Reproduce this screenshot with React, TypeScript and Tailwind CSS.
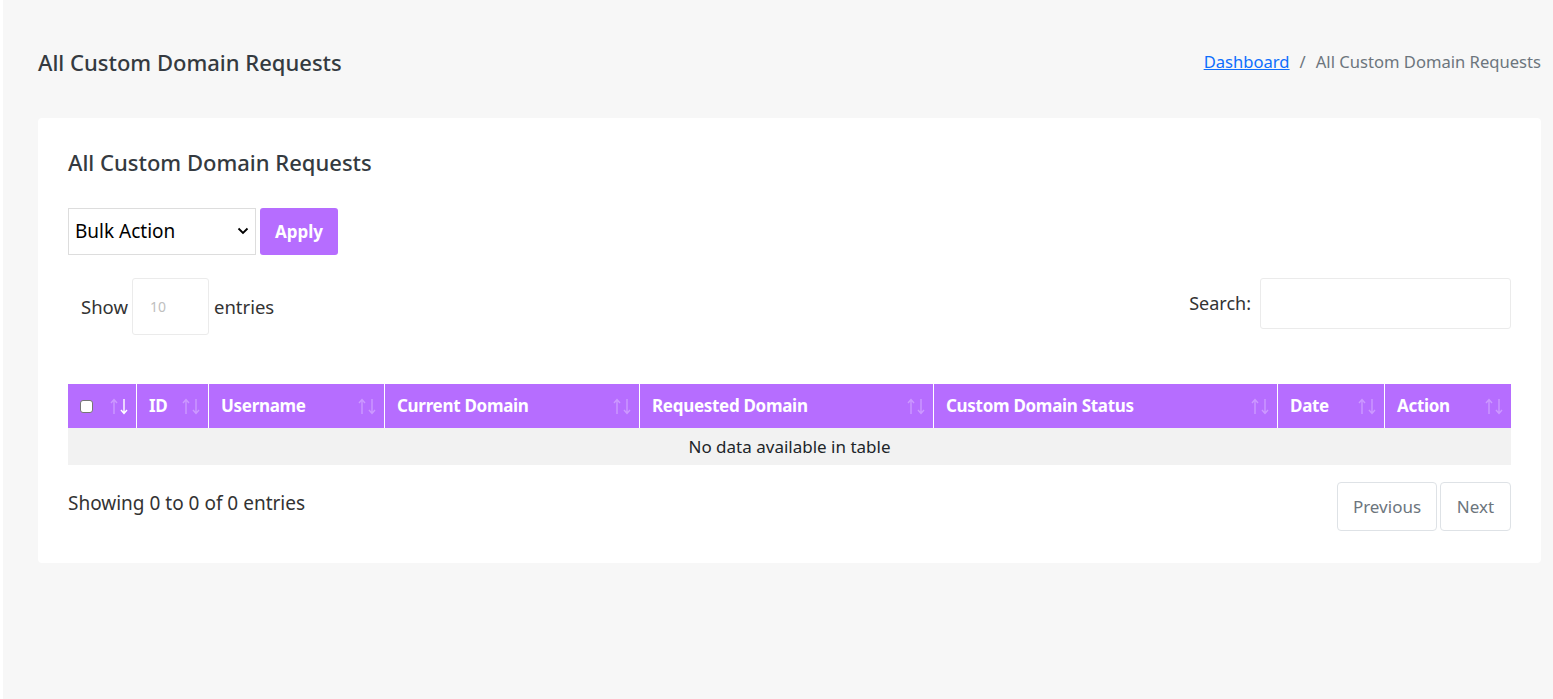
import React from 'react';

const font = { fontFamily: '"Noto Sans", "Open Sans", sans-serif' };

type Col = { label: string; w: string; active?: boolean; check?: boolean };

const cols: Col[] = [
  { label: '', w: 'w-[69px]', check: true, active: true },
  { label: 'ID', w: 'w-[72px]' },
  { label: 'Username', w: 'w-[176px]' },
  { label: 'Current Domain', w: 'w-[255px]' },
  { label: 'Requested Domain', w: 'w-[294px]' },
  { label: 'Custom Domain Status', w: 'w-[344px]' },
  { label: 'Date', w: 'w-[107px]' },
  { label: 'Action', w: 'flex-1' },
];

function Arrow({ down, on }: { down?: boolean; on?: boolean }) {
  return (
    <svg width="8" height="17" viewBox="0 0 8 17" fill="none" className={on ? 'opacity-100' : 'opacity-30'}>
      {down ? (
        <path d="M4 1v14M1 12l3 3.5 3-3.5" stroke="#fff" strokeWidth="1.4" />
      ) : (
        <path d="M4 16V2M1 5l3-3.5L7 5" stroke="#fff" strokeWidth="1.4" />
      )}
    </svg>
  );
}

function SortIcon({ active }: { active?: boolean }) {
  return (
    <span className="flex items-center gap-[2px]">
      <Arrow />
      <Arrow down on={active} />
    </span>
  );
}

export default function App() {
  return (
    <div className="min-h-[699px] bg-white pl-[3px]" style={font}>
      <div className="min-h-[699px] bg-[#f7f7f7] pl-[35px] pr-[12px] pt-[46px]">
        <div className="flex items-center justify-between h-[32px]">
          <h1 className="text-[22px] font-medium text-[#343a40]">All Custom Domain Requests</h1>
          <div className="flex items-center text-[16.6px] text-[#6c757d] gap-[10px]">
            <a href="#" className="text-[#0d6efd] underline">Dashboard</a>
            <span>/</span>
            <span>All Custom Domain Requests</span>
          </div>
        </div>

        <div className="mt-[40px] bg-white rounded-[4px] px-[30px] pt-[30px] pb-[32px]">
          <h2 className="text-[22px] font-medium text-[#343a40] leading-[28px]">All Custom Domain Requests</h2>

          <div className="mt-[32px] flex gap-[4px]">
            <div className="relative w-[188px] h-[47px] border border-[#dddddd] flex items-center pl-[6px] text-[19px] text-black">
              Bulk Action
              <svg className="absolute right-[6px] top-[18px]" width="12" height="8" viewBox="0 0 12 8" fill="none">
                <path d="M1.5 1.5 6 6l4.5-4.5" stroke="#000" strokeWidth="1.8" />
              </svg>
            </div>
            <button className="w-[78px] h-[47px] rounded-[3px] bg-[#b66dff] text-white font-bold text-[17px]">Apply</button>
          </div>

          <div className="mt-[23px] flex items-start justify-between">
            <div className="flex items-center pl-[13px] text-[18.5px] text-[#333]">
              <span>Show</span>
              <div className="ml-[4px] w-[77px] h-[57px] rounded-[3px] border border-[#ebebeb] flex items-center pl-[17px] text-[14px] text-[#c0c0c0]">10</div>
              <span className="ml-[5px]">entries</span>
            </div>
            <div className="flex items-center text-[18px] text-[#333]">
              <span>Search:</span>
              <div className="ml-[9px] w-[251px] h-[51px] rounded-[3px] border border-[#ebebeb] bg-white" />
            </div>
          </div>

          <div className="mt-[49px]">
            <div className="flex h-[44px] bg-[#b66dff] text-white font-bold text-[17px]">
              {cols.map((c, i) => (
                <div
                  key={i}
                  className={`${c.w} flex items-center justify-between pl-[12px] pr-[8px] ${i < cols.length - 1 ? 'border-r border-white' : ''}`}
                >
                  {c.check ? (
                    <span className="w-[13px] h-[13px] rounded-[3px] bg-white border border-[#767676]" />
                  ) : (
                    <span className="tracking-[-0.3px]">{c.label}</span>
                  )}
                  <SortIcon active={c.active} />
                </div>
              ))}
            </div>
            <div className="h-[37px] bg-[#f2f2f2] flex items-center justify-center text-[17px] text-[#212529]">
              No data available in table
            </div>
          </div>

          <div className="mt-[17px] flex items-start justify-between">
            <div className="mt-[7px] text-[19px] text-[#333]">Showing 0 to 0 of 0 entries</div>
            <div className="flex gap-[3px] text-[17px] text-[#6c757d]">
              <div className="w-[100px] h-[49px] border border-[#dee2e6] rounded-[4px] flex items-center justify-center">Previous</div>
              <div className="w-[71px] h-[49px] border border-[#dee2e6] rounded-[4px] flex items-center justify-center">Next</div>
            </div>
          </div>
        </div>
      </div>
    </div>
  );
}
